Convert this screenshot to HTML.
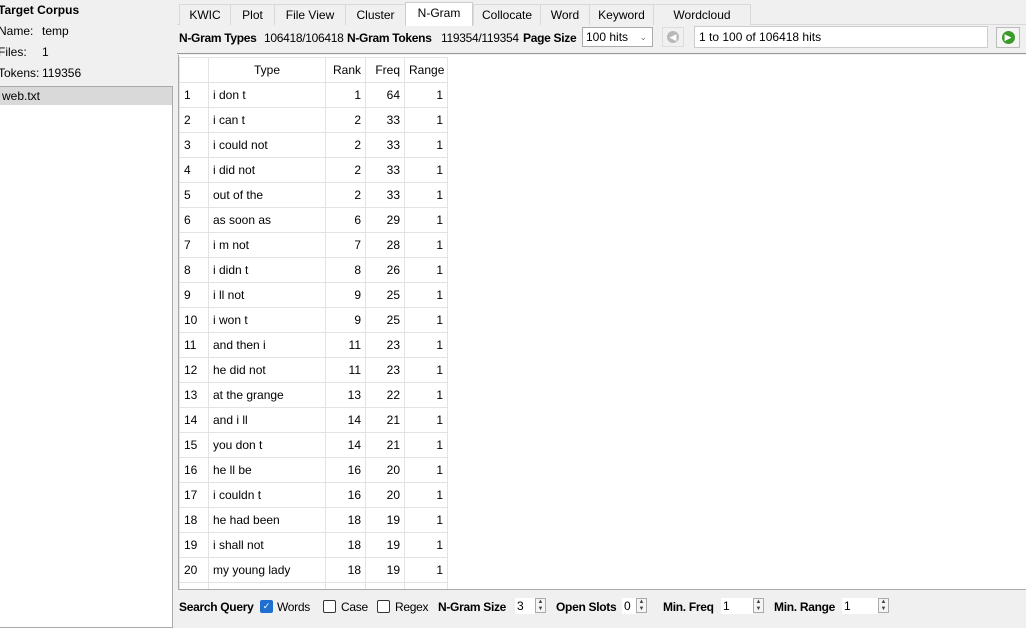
<!DOCTYPE html><html><head><style>
body{margin:0;width:1026px;height:621px;background:#f0f0f0;font-family:"Liberation Sans",sans-serif;font-size:12px;color:#000;position:relative;overflow:hidden}
.a{position:absolute;white-space:nowrap}
b{font-weight:bold}
.tab{position:absolute;top:4px;height:21px;border:1px solid #d9d9d9;border-bottom:none;background:#f0f0f0;box-sizing:border-box;text-align:center;line-height:20px}
table{border-collapse:collapse;position:absolute;left:0;top:0;background:#fff;table-layout:fixed}
tr{height:25px}
td{border:1px solid #e3e3e3;padding:0 4px;box-sizing:border-box;overflow:hidden;white-space:nowrap}
.n{text-align:right}
.sp{position:absolute;width:11px;height:15px;border:1px solid #aaa;background:#f5f5f5;font-size:6px;line-height:7px;text-align:center;color:#444;box-sizing:border-box}
.inp{position:absolute;background:#fff;height:16px;line-height:16px;padding-left:2px;box-sizing:border-box}
.cb{position:absolute;width:13px;height:13px;border:1px solid #333;border-radius:2px;box-sizing:border-box;background:#fff}
.t{letter-spacing:-0.3px}
</style></head><body>
<div class="a" style="left:-2px;top:3px"><b>Target Corpus</b></div>
<div class="a" style="left:-2px;top:24px">Name:</div><div class="a" style="left:42px;top:24px">temp</div>
<div class="a" style="left:-2px;top:45px">Files:</div><div class="a" style="left:42px;top:45px">1</div>
<div class="a" style="left:-2px;top:66px">Tokens:</div><div class="a" style="left:42px;top:66px">119356</div>
<div class="a" style="left:-1px;top:86px;width:172px;height:540px;background:#fff;border:1px solid #aaa"></div>
<div class="a" style="left:0;top:87px;width:170px;height:18px;background:#d9d9d9;line-height:18px;padding-left:2px">web.txt</div>
<div class="a" style="left:177px;top:24px;width:849px;height:1px;background:#d9d9d9"></div>
<div class="tab" style="left:179px;width:52px">KWIC</div>
<div class="tab" style="left:230px;width:45px">Plot</div>
<div class="tab" style="left:274px;width:72px">File View</div>
<div class="tab" style="left:345px;width:61px">Cluster</div>
<div class="tab" style="left:405px;width:68px;background:#fff;top:2px;height:24px;border-color:#ccc">N-Gram</div>
<div class="tab" style="left:473px;width:68px">Collocate</div>
<div class="tab" style="left:540px;width:50px">Word</div>
<div class="tab" style="left:589px;width:65px">Keyword</div>
<div class="tab" style="left:653px;width:98px">Wordcloud</div>
<div class="a t" style="left:179px;top:31px"><b>N-Gram Types</b></div>
<div class="a t" style="left:264px;top:31px">106418/106418</div>
<div class="a t" style="left:347px;top:31px"><b>N-Gram Tokens</b></div>
<div class="a t" style="left:441px;top:31px">119354/119354</div>
<div class="a t" style="left:523px;top:31px"><b>Page Size</b></div>
<div class="a" style="left:582px;top:27px;width:71px;height:20px;background:#fff;border:1px solid #aaa;line-height:19px;padding-left:3px;box-sizing:border-box">100 hits<span style="position:absolute;right:5px;color:#777;font-size:9px">&#8964;</span></div>
<div class="a" style="left:662px;top:27px;width:22px;height:20px;border:1px solid #ddd;background:#f0f0f0;box-sizing:border-box"><div style="margin:3px auto;width:12px;height:12px;border-radius:6px;background:#b8b8b8;color:#fff;font-size:9px;line-height:12px;text-align:center">&#9664;</div></div>
<div class="a" style="left:694px;top:26px;width:294px;height:22px;background:#fff;border:1px solid #ccc;line-height:21px;padding-left:4px;box-sizing:border-box">1 to 100 of 106418 hits</div>
<div class="a" style="left:996px;top:27px;width:24px;height:21px;border:1px solid #bbb;background:#f5f5f5;box-sizing:border-box"><div style="margin:3px auto;width:13px;height:13px;border-radius:7px;background:#3a9a2a;color:#fff;font-size:9px;line-height:13px;text-align:center">&#9654;</div></div>
<div class="a" style="left:177px;top:53px;width:849px;height:1px;background:#999"></div>
<div class="a" style="left:178px;top:55px;width:848px;height:534px;background:#fff;border-left:1px solid #aaa;border-bottom:1px solid #aaa"></div>
<div class="a" style="left:179px;top:57px;width:847px;height:532px;overflow:hidden">
<table style="width:268px">
<colgroup><col style="width:29px"><col style="width:117px"><col style="width:40px"><col style="width:39px"><col style="width:43px"></colgroup>
<tr><td></td><td style="text-align:center">Type</td><td class="n">Rank</td><td class="n">Freq</td><td class="n">Range</td></tr>
<tr><td>1</td><td>i don t</td><td class="n">1</td><td class="n">64</td><td class="n">1</td></tr>
<tr><td>2</td><td>i can t</td><td class="n">2</td><td class="n">33</td><td class="n">1</td></tr>
<tr><td>3</td><td>i could not</td><td class="n">2</td><td class="n">33</td><td class="n">1</td></tr>
<tr><td>4</td><td>i did not</td><td class="n">2</td><td class="n">33</td><td class="n">1</td></tr>
<tr><td>5</td><td>out of the</td><td class="n">2</td><td class="n">33</td><td class="n">1</td></tr>
<tr><td>6</td><td>as soon as</td><td class="n">6</td><td class="n">29</td><td class="n">1</td></tr>
<tr><td>7</td><td>i m not</td><td class="n">7</td><td class="n">28</td><td class="n">1</td></tr>
<tr><td>8</td><td>i didn t</td><td class="n">8</td><td class="n">26</td><td class="n">1</td></tr>
<tr><td>9</td><td>i ll not</td><td class="n">9</td><td class="n">25</td><td class="n">1</td></tr>
<tr><td>10</td><td>i won t</td><td class="n">9</td><td class="n">25</td><td class="n">1</td></tr>
<tr><td>11</td><td>and then i</td><td class="n">11</td><td class="n">23</td><td class="n">1</td></tr>
<tr><td>12</td><td>he did not</td><td class="n">11</td><td class="n">23</td><td class="n">1</td></tr>
<tr><td>13</td><td>at the grange</td><td class="n">13</td><td class="n">22</td><td class="n">1</td></tr>
<tr><td>14</td><td>and i ll</td><td class="n">14</td><td class="n">21</td><td class="n">1</td></tr>
<tr><td>15</td><td>you don t</td><td class="n">14</td><td class="n">21</td><td class="n">1</td></tr>
<tr><td>16</td><td>he ll be</td><td class="n">16</td><td class="n">20</td><td class="n">1</td></tr>
<tr><td>17</td><td>i couldn t</td><td class="n">16</td><td class="n">20</td><td class="n">1</td></tr>
<tr><td>18</td><td>he had been</td><td class="n">18</td><td class="n">19</td><td class="n">1</td></tr>
<tr><td>19</td><td>i shall not</td><td class="n">18</td><td class="n">19</td><td class="n">1</td></tr>
<tr><td>20</td><td>my young lady</td><td class="n">18</td><td class="n">19</td><td class="n">1</td></tr>
<tr><td>21</td><td>and then he</td><td class="n">18</td><td class="n">19</td><td class="n">1</td></tr>
</table></div>
<div class="a t" style="left:179px;top:600px"><b>Search Query</b></div>
<div class="cb" style="left:260px;top:600px;background:#1f6fd0;border-color:#1f6fd0;color:#fff;font-size:9px;line-height:11px;text-align:center">&#10003;</div>
<div class="a t" style="left:277px;top:600px">Words</div>
<div class="cb" style="left:323px;top:600px"></div>
<div class="a t" style="left:341px;top:600px">Case</div>
<div class="cb" style="left:377px;top:600px"></div>
<div class="a t" style="left:395px;top:600px">Regex</div>
<div class="a t" style="left:438px;top:600px"><b>N-Gram Size</b></div>
<div class="inp" style="left:515px;top:598px;width:20px">3</div><div class="sp" style="left:535px;top:598px">▲<br>▼</div>
<div class="a t" style="left:556px;top:600px"><b>Open Slots</b></div>
<div class="inp" style="left:622px;top:598px;width:14px">0</div><div class="sp" style="left:636px;top:598px">▲<br>▼</div>
<div class="a t" style="left:663px;top:600px"><b>Min. Freq</b></div>
<div class="inp" style="left:721px;top:598px;width:32px">1</div><div class="sp" style="left:753px;top:598px">▲<br>▼</div>
<div class="a t" style="left:774px;top:600px"><b>Min. Range</b></div>
<div class="inp" style="left:842px;top:598px;width:36px">1</div><div class="sp" style="left:878px;top:598px">▲<br>▼</div>
</body></html>
